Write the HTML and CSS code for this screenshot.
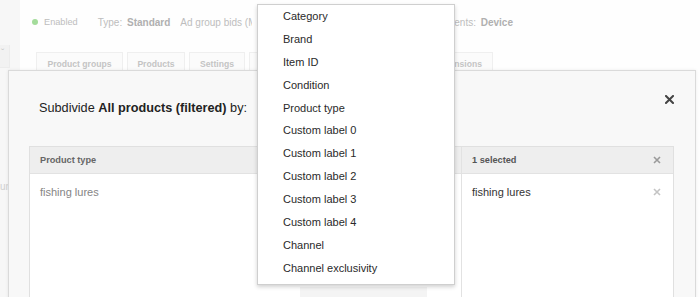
FILE: index.html
```html
<!DOCTYPE html>
<html lang="en">
<head>
<meta charset="utf-8">
<title>Subdivide product group</title>
<link rel="stylesheet" href="styles.css">
</head>
<body>
<div class="page">
  <aside class="side">
    <div class="side-select"><span class="chev">&#711;</span></div>
    <div class="side-text">un</div>
  </aside>
  <main class="main">
    <div class="topbar">
      <span class="status"><span class="dot"></span>Enabled</span>
      <span class="meta">Type: <b>Standard</b></span>
      <span class="meta meta-clip">Ad group bids (Max. CPC)</span>
      <span class="meta meta-right">ents: <b>Device</b></span>
    </div>
    <nav class="tabs">
      <span class="tab tab-1">Product groups</span>
      <span class="tab tab-2">Products</span>
      <span class="tab tab-3">Settings</span>
      <span class="tab tab-4"></span>
      <span class="tab tab-5"></span>
      <span class="tab tab-6"><span class="tab-clip">nsions</span></span>
    </nav>
  </main>

  <section class="modal">
    <div class="modal-head">
      <h2 class="modal-title">Subdivide <b>All products (filtered)</b> by:</h2>
      <button class="close" aria-label="Close">
        <svg width="9" height="9" viewBox="0 0 9 9"><path d="M1 1L8 8M8 1L1 8" stroke="#444" stroke-width="2" stroke-linecap="square"/></svg>
      </button>
    </div>
    <div class="panels">
      <div class="panel panel-left">
        <div class="panel-head">Product type</div>
        <div class="panel-row muted">fishing lures</div>
        <div class="more"></div>
      </div>
      <div class="panel panel-right">
        <div class="panel-head">
          <span>1 selected</span>
          <svg class="x" width="8" height="8" viewBox="0 0 8 8"><path d="M1 1L7 7M7 1L1 7" stroke="#9a9a9a" stroke-width="1.6"/></svg>
        </div>
        <div class="panel-row">
          <span>fishing lures</span>
          <svg class="x" width="8" height="8" viewBox="0 0 8 8"><path d="M1 1L7 7M7 1L1 7" stroke="#c4c4c4" stroke-width="1.6"/></svg>
        </div>
      </div>
    </div>
  </section>

  <ul class="menu">
    <li>Category</li>
    <li>Brand</li>
    <li>Item ID</li>
    <li>Condition</li>
    <li>Product type</li>
    <li>Custom label 0</li>
    <li>Custom label 1</li>
    <li>Custom label 2</li>
    <li>Custom label 3</li>
    <li>Custom label 4</li>
    <li>Channel</li>
    <li>Channel exclusivity</li>
  </ul>
</div>
</body>
</html>
```

FILE: styles.css
```css
* { box-sizing: border-box; }

html, body {
  margin: 0;
  padding: 0;
  background: #fefefe;
  font-family: "Liberation Sans", Arial, sans-serif;
}

.page {
  position: relative;
  width: 700px;
  height: 297px;
  overflow: hidden;
  display: flex;
}

/* faded background page */
.side {
  width: 20px;
  flex: none;
  background: #f7f7f7;
  padding-top: 45px;
}
.side-select {
  width: 10px;
  height: 23px;
  background: #f2f2f2;
  border-right: 1px solid #ececec;
  border-bottom: 1px solid #ececec;
  color: #c8c8c8;
  font-size: 10px;
  line-height: 18px;
}
.chev { padding-left: 1px; }
.side-text {
  margin-top: 113px;
  font-size: 10px;
  color: #d0d0d0;
  line-height: 12px;
}

.main {
  flex: 1;
  padding-left: 12px;
}

.topbar {
  height: 44px;
  display: flex;
  align-items: center;
  padding-right: 187px;
  font-size: 10px;
  color: #bdbdbd;
  white-space: nowrap;
}
.status {
  display: flex;
  align-items: center;
  font-size: 9.2px;
  margin-right: 20px;
}
.dot {
  width: 6px;
  height: 6px;
  border-radius: 50%;
  background: #a4dc9b;
  margin-right: 6px;
}
.meta { margin-right: 10px; }
.meta b { color: #b0b0b0; margin-left: 2px; }
.meta-clip {
  width: 72px;
  overflow: hidden;
  margin-right: 0;
}
.meta-right { margin-left: auto; margin-right: 0; }

.tabs {
  display: flex;
  gap: 4px;
  margin-top: 8px;
  padding-left: 4px;
}
.tab {
  height: 24px;
  padding-top: 6px;
  background: #fbfbfb;
  border: 1px solid #efefef;
  border-bottom: none;
  font-size: 8.6px;
  font-weight: bold;
  color: #c4c4c4;
  text-align: center;
}
.tab-1 { width: 87px; }
.tab-2 { width: 58px; }
.tab-3 { width: 56px; }
.tab-4 { width: 60px; }
.tab-5 { width: 110px; }
.tab-6 {
  width: 66px;
  text-align: right;
  padding-right: 10px;
}

/* modal dialog */
.modal {
  position: absolute;
  left: 8px;
  top: 70px;
  width: 688px;
  height: 240px;
  background: #f8f8f8;
  border: 1px solid #dadada;
  box-shadow: 0 0 3px rgba(0, 0, 0, 0.08);
  padding: 0 21px 0 20px;
}
.modal-head {
  height: 75px;
  display: flex;
  justify-content: space-between;
  align-items: flex-start;
  padding: 24px 0 0 10px;
}
.modal-title {
  margin: 5px 0 0;
  font-size: 12.7px;
  line-height: 16px;
  font-weight: normal;
  color: #222;
}
.modal-title b { font-weight: bold; color: #222; }
.close {
  border: 0;
  background: none;
  padding: 0;
  width: 9px;
  height: 9px;
  display: block;
}
.close svg { display: block; }

.panels {
  display: flex;
  height: 200px;
  border: 1px solid #e0e0e0;
  background: #fff;
}
.panel-left { width: 431px; flex: none; }
.panel-right { flex: 1; border-left: 1px solid #e2e2e2; }
.panel-head {
  height: 27px;
  background: #eeeeee;
  border-bottom: 1px solid #e2e2e2;
  display: flex;
  align-items: center;
  justify-content: space-between;
  padding: 0 12px 0 10px;
  font-size: 9.2px;
  font-weight: bold;
  color: #666;
}
.panel-right .panel-head { padding-left: 10px; color: #555; }
.panel-row {
  display: flex;
  justify-content: space-between;
  align-items: center;
  padding: 11px 12px 0 10px;
  font-size: 11px;
  line-height: 14px;
  color: #333;
}
.panel-row.muted { color: #858585; }
.x { display: block; }

.more {
  margin: 88px 0 0 270px;
  width: 127px;
  height: 24px;
  background: #f4f4f4;
}

/* dropdown menu */
.menu {
  position: absolute;
  left: 257px;
  top: 4px;
  width: 198px;
  height: 281px;
  margin: 0;
  padding: 0 0 5px;
  list-style: none;
  background: #fff;
  border: 1px solid #cfcfcf;
  box-shadow: 0 2px 4px rgba(0, 0, 0, 0.18);
}
.menu li {
  height: 22.88px;
  line-height: 22.88px;
  padding-left: 25px;
  font-size: 11px;
  color: #2a2a2a;
}
```
